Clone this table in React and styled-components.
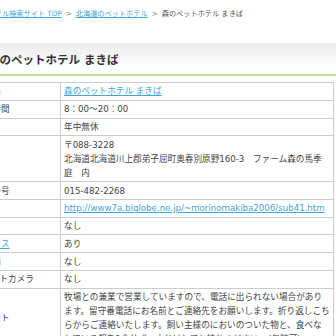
import React from "react";
import styled, { createGlobalStyle } from "styled-components";

const GlobalStyle = createGlobalStyle`
  html, body {
    margin: 0;
    padding: 0;
    background: #fff;
    overflow: hidden;
  }
  body {
    font-family: "DejaVu Sans", "Noto Sans CJK JP", sans-serif;
    color: #444;
  }
`;

const rows = [
  { label: "施設名", value: "森のペットホテル まきば", link: true },
  { label: "営業時間", value: "8：00～20：00" },
  { label: "定休日", value: "年中無休" },
  {
    label: "住所",
    value: "〒088-3228\n北海道北海道川上郡弟子屈町奥春別原野160-3　ファーム森の馬季庭　内",
  },
  { label: "電話番号", value: "015-482-2268" },
  { label: "URL", value: "http://www7a.biglobe.ne.jp/~morinomakiba2006/sub41.htm", link: true },
  { label: "送迎", value: "なし" },
  { label: "サービス", value: "あり", labelLink: true },
  { label: "駐車場", value: "なし" },
  { label: "※ネットカメラ", value: "なし" },
  {
    label: "コメント",
    value:
      "牧場との兼業で営業していますので、電話に出られない場合があります。留守番電話にお名前とご連絡先をお願いします。折り返しこちらからご連絡いたします。飼い主様のにおいのついた物と、食べなれている餌を1食分ずつ小分けしてお持ちください。（缶詰可）",
  },
];

const App = () => {
  return (
    <>
      <GlobalStyle />
      <Page>
        <Breadcrumb>
          <Crumb href="#">ペットホテル検索サイト TOP</Crumb>
          <Sep>&gt;</Sep>
          <Crumb href="#">北海道のペットホテル</Crumb>
          <Sep>&gt;</Sep>
          <span>森のペットホテル まきば</span>
        </Breadcrumb>
        <TitleBar>森のペットホテル まきば</TitleBar>
        <InfoTable>
          <colgroup>
            <col style={{ width: 91 }} />
            <col />
          </colgroup>
          <tbody>
            {rows.map((row) => (
              <tr key={row.label}>
                <Label>{row.labelLink ? <Link href="#">{row.label}</Link> : row.label}</Label>
                <Value>{row.link ? <Link href="#">{row.value}</Link> : row.value}</Value>
              </tr>
            ))}
          </tbody>
        </InfoTable>
      </Page>
    </>
  );
};

export default App;

const Page = styled.div`
  width: 365px;
  margin-left: -31px;
`;

const Breadcrumb = styled.nav`
  display: flex;
  align-items: center;
  gap: 4px;
  height: 26px;
  margin-left: -3px;
  font-size: 7.2px;
  color: #555;
  white-space: nowrap;
`;

const Crumb = styled.a`
  color: #3ea6d6;
  text-decoration: underline;
`;

const Sep = styled.span`
  color: #888;
`;

const TitleBar = styled.h1`
  display: flex;
  align-items: center;
  box-sizing: border-box;
  width: 420px;
  height: 33px;
  margin: 17px 0 0;
  padding-left: 19px;
  font-size: 11.5px;
  font-weight: bold;
  color: #333;
  background: linear-gradient(#ebebeb, #fff 75%);
  border-bottom: 2px solid #c3e09a;
`;

const InfoTable = styled.table`
  width: 100%;
  table-layout: fixed;
  margin-top: 6px;
  border-collapse: collapse;
  font-size: 8.64px;
  line-height: 14px;
`;

const Label = styled.th`
  padding: 1.4px 5px;
  text-align: left;
  font-weight: normal;
  color: #444;
  vertical-align: middle;
  border: 1px solid #ccc;
  white-space: nowrap;
  overflow: hidden;
`;

const Value = styled.td`
  padding: 1.4px 3px;
  border: 1px solid #ccc;
  white-space: pre-line;
  vertical-align: middle;
`;

const Link = styled.a`
  color: #3ea6d6;
  text-decoration: underline;
`;
